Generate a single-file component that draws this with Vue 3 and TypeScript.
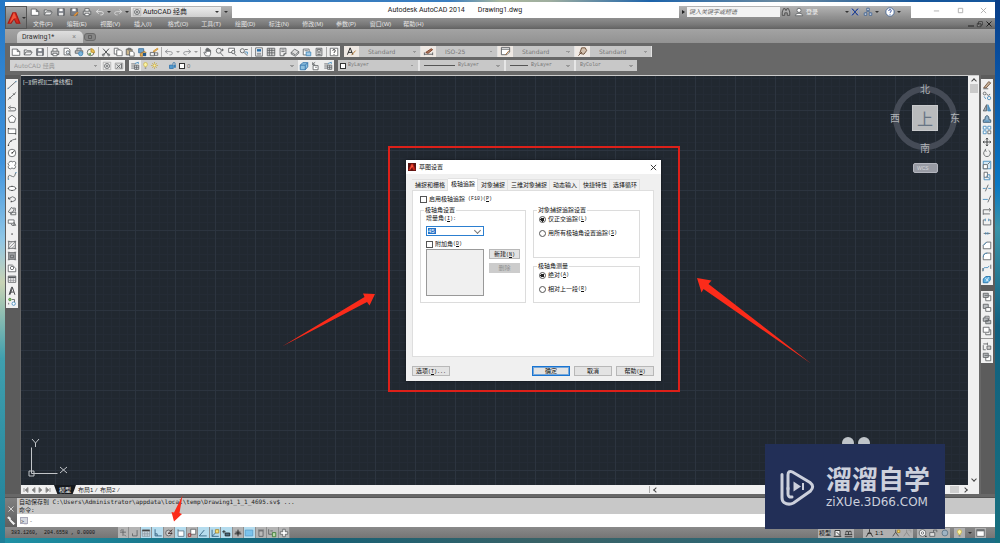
<script setup lang="ts">
import { h, ref } from 'vue'

type Shape = [d: string, stroke: string, fill?: string]

const K = '#5c5f62'
const B = '#3f88bc'
const N = 'none'

const shapes: Record<string, Shape[]> = {
  new: [['M1.5 2.5h6l3 3v4.500h-9z M7.500 2.500v3h3', K, '#fff']],
  open: [['M1.500 9.500v-6h3l1 1h4v1.500', K, '#e8e8e8'], ['M1.500 9.500l2-3.500h7.500l-2 3.500z', K, '#f4f4f4']],
  save: [['M2 2h8v8h-8z', K, '#7b7f88'], ['M4 2h4v3h-4z', N, '#fff'], ['M3.500 7h5v3h-5z', N, '#e6e6e6']],
  saveas: [['M2 2h8v8h-8z', K, '#7b7f88'], ['M4 2h4v3h-4z', N, '#fff'], ['M6 10l4-4 1 1-4 4z', '#c77b2b', '#e8a24a']],
  print: [['M3.500 5v-3h5v3', K, '#fff'], ['M1.500 5h9v4h-9z', K, '#d5d5d5'], ['M3.500 7.500h5v3h-5z', K, '#fff']],
  preview: [['M2.500 1.500h5l2 2v6h-7z', K, '#fff'], ['M5 6.500a2 2 0 1 0 4 0a2 2 0 1 0-4 0 M8.500 8l2.500 3', K, '#e3edf6']],
  plot: [['M3.500 4v-2.500h5v2.500 M1.500 4.500h9v3h-9z', K, '#c5c5c5'], ['M5.500 8a2.500 2.500 0 1 0 5 0a2.500 2.500 0 1 0-5 0', B, '#7db5da']],
  publish: [['M1.500 6.500a4 4 0 1 0 8 0a4 4 0 1 0-8 0', K, '#f1f1e6'], ['M6 2a4.500 4.500 0 0 1 4 5l-4-1z', '#b58a2b', '#edc352'], ['M2 8.500l4-2v4z', N, '#6fa35b']],
  cut: [['M2.500 2l6.500 7.500 M9.500 2l-6.500 7.500', '#2d3033'], ['M1.500 9.500a1.200 1.200 0 1 0 2.400 0a1.200 1.200 0 1 0-2.400 0 M8.100 9.500a1.200 1.200 0 1 0 2.400 0a1.200 1.200 0 1 0-2.400 0', K]],
  copy: [['M1.500 1.500h4.500l1 1v6h-5.500z', K, '#fff'], ['M4.500 3.500h4.500l2 2v5h-6.500z', K, '#fff']],
  paste: [['M1.500 2.500h7v7h-7z', K, '#c9b48a'], ['M3.500 1.500h3v2h-3z', K, '#999'], ['M5.500 5h3.500l2 2v4h-5.500z', K, '#fff']],
  match: [['M2 2h6v5h-6z', '#3a6f99', '#6ea0c9'], ['M4 8l5-3 2 2-4 4h-3z', '#a8742c', '#e5b055'], ['M7 7h4v4h-4z', N, '#26598b']],
  block: [['M1.500 6.500h5v4h-5z M6.500 7h4v3h-4z', K, '#eee'], ['M5 5l5-3.500 1 1-5 3.500z', '#c98c2f', '#efc15f']],
  undo: [['M4.500 3l-3 2.500 3 2.500 M1.500 5.500h6q2.500 0 2.500 2t-2.500 2h-1', '#8b8e91']],
  redo: [['M7.500 3l3 2.500-3 2.500 M10.500 5.500h-6q-2.500 0-2.500 2t2.500 2h1', '#8b8e91']],
  qundo: [['M4.500 3l-3 2.500 3 2.500 M1.500 5.500h6q2.500 0 2.500 2t-2.500 2h-1', '#e6e6e6']],
  qredo: [['M7.500 3l3 2.500-3 2.500 M10.500 5.500h-6q-2.500 0-2.500 2t2.500 2h1', '#d9d9d9']],
  pan: [['M3 10.500l-2-4 1-.500 1.500 1.500v-5h1v3-4h1.200v4-3.500h1.200v3.500-2.500h1.200v2.500-1.500h1v4l-1.100 3z', K, '#fff']],
  zoomrt: [['M1.500 4.500a3 3 0 1 0 6 0a3 3 0 1 0-6 0 M6.500 7l3.500 4 M9 2v3 M7.500 3.500h3', K]],
  zoomwin: [['M2 1.500h7v5h-7z', K, '#fff'], ['M5.500 6a2 2 0 1 0 4 0a2 2 0 1 0-4 0 M8.500 7.500l2.500 3', K, '#eee']],
  zoomprev: [['M1.500 4.500a2.500 2.500 0 1 0 5 0a2.500 2.500 0 1 0-5 0 M6 6.500l4 4 M7 3h3.500', K, '#eee'], ['M7 6h3v3', B]],
  props: [['M2 1h8v10h-8z', K, '#fff'], ['M3.500 2.500h5v3h-5z', N, '#2c6fa8'], ['M3.500 7.500h5 M3.500 9.500h5', K]],
  center: [['M1.500 1.500h9v9h-9z', K, '#d6d6d6'], ['M1.500 4h9 M4 1.500v9 M7 1.500v9 M1.500 7h9', K]],
  palette: [['M2.500 1.500h7v6l-3 3h-4z', K, '#efefef'], ['M4 3.500h4 M4 5.500h4 M7 11v-3h3', K]],
  sheet: [['M1.500 6.500l4-4 5 3-4 4z', K, '#ddd'], ['M1.500 6.500v2l5 2.500 4-3.500v-2', K]],
  markup: [['M1.500 2.500h7v7h-7z', K, '#fff'], ['M5 6h5.500v4.500h-5.500z', B, '#a7cce6'], ['M3 4.500h4', K]],
  calc: [['M2.500 1.500h7v9h-7z', K, '#e3e3e3'], ['M4 3h4v2h-4z', K, '#fff'], ['M4 7h4 M4 9h4', K]],
  help: [['M1.500 1.500h9v9h-9z', K, '#fff'], ['M4.500 4.500q0-1.500 1.500-1.500t1.500 1.500-1.500 2v.800 M6 8.500v1', '#222']],
  txtstyle: [['M1.500 9.500l3-7.500 3 7.500 M2.500 7h4', '#222'], ['M6 10l4.500-5', '#b5782e']],
  dimstyle: [['M1.500 9h9 M1.500 7v3 M10.500 7v3', K], ['M3 7l6-4 1.500 1-5 4z', '#7a3b25', '#b07b5d']],
  tblstyle: [['M1.500 1.500h9v5l-3 3h-6z M1.500 3.500h9', K, '#fff'], ['M6 9.500l4-4.500', '#a5672f']],
  mlstyle: [['M3 8l2-6 4 0 1.500 3-3 4z', '#6a4b35', '#d4c2b0'], ['M1.500 10.500l4-4', '#6a4b35']],
  gear: [['M1.500 1.500h9v9h-9z', '#b0b0b0'], ['M3 6a3 3 0 1 0 6 0a3 3 0 1 0-6 0', K], ['M5 6a1 1 0 1 0 2 0a1 1 0 1 0-2 0', K]],
  wsp: [['M1.500 2.500h9v7h-9z', '#999', '#ddd'], ['M3 4l5 5 M8 4l-5 5 M9 3v6', K]],
  layers: [['M1.500 3.500h5 M1.500 6h4 M1.500 8.500h4', K], ['M5.500 5h5v5h-5z M5.500 7.500h5 M8 5v5', K, '#dfe6ec'], ['M6 3l4-1.500v2', B]],
  bulb: [['M3.500 4.500a2.500 2.500 0 1 1 5 0q0 1.500-1.500 2.500v1h-2v-1q-1.500-1-1.500-2.500z', '#c9b34b', '#fbf3a3'], ['M5 9.500h2', K]],
  sun: [['M4 6a2 2 0 1 0 4 0a2 2 0 1 0-4 0', '#c2a331', '#fdf0a0'], ['M6 1.500v1.500 M6 9v1.500 M1.500 6h1.500 M9 6h1.500 M3 3l1 1 M8 8l1 1 M9 3l-1 1 M4 8l-1 1', '#c2a331']],
  lock: [['M2 5.500h5v4.500h-5z', '#2c6fa8', '#4f9bd0'], ['M6.500 5v-1.500q0-1.500 1.500-1.500t1.500 1.500v1.500', '#2c6fa8'], ['M8 5h2.500v4h-2.500z', N, '#3b80b5']],
  cube: [['M1.500 5l3-3h6v5l-3 3.500h-6z', '#2c6fa8', '#8fc0de'], ['M1.500 5h6v5.500 M7.500 5l3-3', '#2c6fa8']],
  layprev: [['M2.500 5.500h6v5h-6z', K, '#fff'], ['M2 1.500v3h3 M2 4l3-2.500 M5 7.500h2', K]],
  line: [['M1 10.500l10-9', K], ['M.500 10h1.500 M10 2h1.500', B]],
  xline: [['M1 10.500l10-9', K], ['M3 7.500l1.500 1.500 M7.500 3l1.500 1.500', '#222']],
  pline: [['M1.500 9.500h7q2 0 2-2t-2-2h-5', K], ['M4.500 3.500l-3 2 3 2', K]],
  polygon: [['M6 1.500l4.500 3.500-1.700 5h-5.600l-1.700-5z', K, '#fff']],
  rect: [['M1.500 3.500h9v5.500h-9z', K, '#fff'], ['M1 3h1.500 M9.500 9.500h1.500', '#111']],
  arc: [['M1.500 10.500q1-7 9-8', K], ['M1 10h1.500 M4 5h1.500 M10 2.500h1', '#111']],
  circle: [['M1.500 6a4.500 4.500 0 1 0 9 0a4.500 4.500 0 1 0-9 0', K, '#fff'], ['M5 6h2 M6 6l3-2.500', '#222']],
  cloud: [['M3 2q3-1.500 3 .500 4-2 4.500 1 .500 2-1.500 2.500 2.500 2 .500 4-2 1-3.500-.500-1.500 2-4 .500-1.500-2 .500-3.500-3-2 .500-4z', K, '#fff']],
  spline: [['M1.500 10q-.500-6 2.500-4.500t4 1.500 2.500-5', K], ['M1 10h1.500 M10 2h1.500', B]],
  ellipse: [['M1.500 6.500a4.500 2.500 0 1 0 9 0a4.500 2.500 0 1 0-9 0', K, '#fff'], ['M5.500 4h1 M1 6.500h1 M10 6.500h1 M5.500 9h1', '#111']],
  earc: [['M3 5q4-3.500 7 0 1.500 3-3 4h-2', K], ['M2 4v2h2 M5 8v2', '#222']],
  insert: [['M1.500 7l4-5.500 3 3-3 4.500z M4.500 7.500h6v3h-6z', K, '#eee'], ['M7 2.500h3v4', K]],
  mkblock: [['M1.500 3.500h7v4h-7z', K, '#fff'], ['M5 8a2 2 0 1 0 4 0 M8 6l2.500 4h-4', K]],
  point: [['M5.500 6h1.300 M6 5.500v1.300', '#333']],
  hatch: [['M2 2h8v8h-8z', K, '#eee'], ['M2 6l4-4 M2 10l8-8 M6 10l4-4', '#8a8d90'], ['M1 1.500h2 M9 1.500h2 M1 10.500h2 M9 10.500h2', K]],
  gradient: [['M2 2h8v8h-8z', K, '#a2a5a8'], ['M4 5h4v3h-4z M1 1.500h2 M9 1.500h2 M1 10.500h2 M9 10.500h2', K]],
  region: [['M1.500 2.500h5l4 4v4h-9z', K, '#fff'], ['M4 6a2 2 0 1 0 4 0a2 2 0 1 0-4 0', K]],
  table: [['M1.500 2.500h9v7.500h-9z', K, '#fff'], ['M1.500 3h9v2h-9z', N, '#55585b'], ['M4.500 5v5 M7.500 5v5 M1.500 7.500h9', '#8b8e91']],
  mtext: [['M2.500 10.500l3-9h1l3 9 M3.800 7.300h4.400 M3.500 10.500l3-8.500', '#2b2e31']],
  addsel: [['M2 3a1.500 1.500 0 1 0 3 0a1.500 1.500 0 1 0-3 0', '#4f8b3b', '#8cc074'], ['M6 8a2 2 0 1 0 4 0a2 2 0 1 0-4 0', B, '#fff'], ['M6 3h3v3 M2 7v2', K]],
  erase: [['M2 9.500l6-7.500 2.500 1.500-5.500 6z', '#6a4b35', '#c9b39a'], ['M1.500 10.500h6', K]],
  copyobj: [['M1.500 3a1.700 1.700 0 1 0 3.400 0a1.700 1.700 0 1 0-3.400 0 M6 3.500a1.700 1.700 0 1 0 3.400 0', K], ['M6.500 8.500a2 2 0 1 0 4 0a2 2 0 1 0-4 0 M2.500 6.500l2 3', B]],
  mirror: [['M5.500 2v7.500h-4z', K, '#9cabb7'], ['M7 2v7.500h3.500z', B, '#5f9cc6']],
  offset: [['M1.500 10h9v-3h-2q0-5-2.500-5t-2.500 5h-2z', '#33526b', '#8fb2cc'], ['M3.500 8.500h5', B]],
  array: [['M1.500 1.500h3.500v3.500h-3.500z M7 1.500h3.500v3.500h-3.500z M1.500 7h3.500v3.500h-3.500z', B, '#fff'], ['M7 7h3.500v3.500h-3.500z', K, '#fff']],
  move: [['M6 1.500v9 M1.500 6h9 M4.800 2.800l1.200-1.500 1.200 1.500 M4.800 9.200l1.200 1.500 1.200-1.500 M2.800 4.800l-1.500 1.200 1.500 1.200 M9.200 4.800l1.500 1.200-1.500 1.200', '#2b2e31']],
  rotate: [['M4 2.800a4 4 0 1 0 4 0 M4.500 1l-1 2 2 1', K]],
  scale: [['M1.500 1.500h9v9h-9z', B, '#d4e8f5'], ['M1.500 5.500h5v5h-5z', K, '#fff'], ['M7 5l2.500-2.500', K]],
  stretch: [['M2.500 1.500h4v6h-4z', K, '#fff'], ['M2.500 7.500v3h7v-6h-3 M5 6l4 3', B]],
  trim: [['M1 6.500h3.500 M7.500 6.500h3.500', B], ['M4 10l3.500-8', K]],
  extend: [['M1 6.500h6', B], ['M7 10l3.500-8', K]],
  breakpt: [['M1.500 10.500v-6h9 M8.500 2.500l2 2-2 2 M1.500 9.500h8', K]],
  breakob: [['M3.500 3.500h-2v6h9v-6h-2', K], ['M4 2v3 M8 2v3', B]],
  join: [['M2 6.500h8', K], ['M4.500 5v3 M7 5v3', B]],
  chamfer: [['M1.500 10.500v-4l4-4h5v8z', K, '#fff'], ['M1.500 6.500l4-4', B]],
  fillet: [['M1.500 10.500v-3q0-5 5-5h4v8z', K, '#fff'], ['M1.500 7.500q0-5 5-5', B]],
  blend: [['M1.500 9.500q0-5 3-4t4-2', B], ['M1 6v4 M10.500 2v5', K]],
  explode: [['M1.500 6l3-3h5.500v4l-3 3.500h-5.500z', '#1e6da6', '#5fb0e0'], ['M4 5l4 4 M8 4l-3 5', '#e9f4fb']],
  front: [['M4.500 4.500h6v6h-6z', K, '#fff'], ['M1.500 1.500h6v5h-6z', K, '#b9bcbf'], ['M3 4h4', K]],
  back: [['M1.500 1.500h6v5h-6z', K, '#b9bcbf'], ['M4.500 5.500h6v4.500h-6z', K, '#fff']],
  above: [['M3.500 1.500h5v4h-5z', K, '#fff'], ['M1.500 3.500h6v4h-6z M4.500 6.500h6v4h-6z', K, '#b9bcbf']],
  under: [['M1.500 1.500h7v6h-7z', K, '#fff'], ['M4.500 8.500v2h6v-6h-2', K]],
  annfront: [['M1.500 3.500h5 M6.500 2v3 M1.500 5v5.500h3', K], ['M6 6h4.500v4h-4.500z', K, '#ccc']],
  binoc: [['M1.500 10v-4l1.500-4h2l.500 2h1l.500-2h2l1.500 4v4h-3v-3h-3v3z', '#444', '#aaa']],
  user: [['M3.500 4a2.500 2.500 0 1 0 5 0a2.500 2.500 0 1 0-5 0', K, '#fff'], ['M1.500 10.500q0-3 4.500-3t4.500 3z', K, '#fff']],
  exch: [['M2 2l8 8 M10 2l-8 8 M3 2l6 8 M9 2l-6 8', '#1e3f94'], ['M1.500 2v8 M10.500 2v8', '#8fa5da']],
  tri: [['M4.500 1.500h3v3h-3z M1.500 7h3v3h-3z M7.500 7h3v3h-3z', '#42638f', '#cfdced'], ['M6 4.500l-3 2.500 M6 4.500l3 2.500', '#42638f']],
  qmark: [['M1 6a5 5 0 1 0 10 0a5 5 0 1 0-10 0', '#3c5f92', '#fff'], ['M4.500 4.800q0-1.800 1.500-1.800t1.500 1.500-1.500 2v.500 M6 8.300v1', '#1e3f94']],
  infer: [['M6 1.500v8 M2.500 5h7 M3 3l2-1 M7.500 8l2 2', K]],
  snap: [['M8.500 2.500v7h-5.500 M3 6.500v3', K]],
  grid: [['M1.500 2.500h9v7.500h-9z', '#8f9ba3', '#c8d6df'], ['M1.500 2h9v2h-9z', N, '#454545'], ['M4.500 4v6 M7.500 4v6 M1.500 7h9', '#8f9ba3']],
  ortho: [['M2.500 1.500v8h8 M2.500 7h2.500v2.500', '#2b5a78']],
  polar: [['M2 6a3.500 3.500 0 1 0 7 0a3.500 3.500 0 1 0-7 0', K, '#ccc'], ['M5 6.500l5-4.500 M5 6.500h5', '#3a2020']],
  osnap: [['M2.500 3.500h7v6.500h-7z', '#5a7385', '#fff'], ['M1.500 2.500h2', K]],
  osnap3: [['M4.500 1.500h6v6h-6z', K, '#fff'], ['M1.500 7h3v3h-3z', '#8c2a2a', '#e2b9b9']],
  otrack: [['M1.500 9.500h9 M1.500 9.500l6-7', '#2b5a78']],
  ducs: [['M2.500 2v8h8 M2.500 10l5-5', '#2b5a78'], ['M6.500 2h4v4h-4z', '#a8852b', '#f0df7a']],
  dyn: [['M1.500 4.500h4 M3.500 2.500v4', '#222'], ['M5 6h5.500v3.500h-5.500z', '#222', '#4a6a80']],
  lwt: [['M2 7h8', '#111'], ['M6 2v8 M3 5h6', '#111']],
  tpy: [['M1.500 2.500h9v7h-9z', '#5ba0cc', '#7cc3ec']],
  qp: [['M3.500 3.500h5v6.500h-5z M2.500 2.500h7', K, '#bbb']],
  sc: [['M2 1.500v6h4 M4 3.500h3', K], ['M6.500 5.500h4v5h-4z', '#3f7a35', '#b9dba9']],
  am: [['M4.500 1.500h3v3h3v3h-3v3h-3v-3h-3v-3h3z', K, '#fff']],
  layout: [['M1.500 10h9 M3 9v-6h6v6 M5 5l4 4', '#222', '#eee']],
  qview: [['M1.500 8h9 M3 8v-4h2.500v4 M6.500 8v-4h2.500v4 M1.500 10.500h9', '#222', '#eee']],
  scaleA: [['M6 1.500v3l-4 6 M6 4.500l4 6 M3.500 6.500h5', '#222']],
  annvis: [['M5 2v3l-3.500 5 M5 5l3.500 5', '#444'], ['M7 2.500h3v3h-3z', '#a8852b', '#f6dc6a']],
  annauto: [['M5 2v3l-3.500 5 M5 5l3.500 5', '#888'], ['M7 2.500h3v3', '#999']],
  wsgear: [['M2 6a4 4 0 1 0 8 0a4 4 0 1 0-8 0 M4.500 6a1.500 1.500 0 1 0 3 0a1.500 1.500 0 1 0-3 0', K, '#fff'], ['M9 10h2', '#111']],
  tlock: [['M1.500 5.500h6v4.500h-6z', K, '#ddd'], ['M6 5v-2.500h4v2.500', K]],
  hw: [['M3 6a3.500 3.500 0 1 0 7 0a3.500 3.500 0 1 0-7 0', '#5c7284', '#9fb4c4']],
  clean: [['M1.500 2h9v8h-9z', K, '#fff'], ['M1.500 2h9v2h-9z', N, '#6f7274']],
  wrench: [['M2 2.500l2 1 .500 2 4.500 5 1.500-1.500-5-4.500-.500-2.500-2-1z', '#f0f0f0', '#f0f0f0']],
  cross: [['M3 3l6 6 M9 3l-6 6', '#e4e4e4']],
  logo: [['M1 10.500l4-9h2.500l3.500 9h-3l-2-4-2.500 4z', '#a81a14', '#d42a1f'], ['M6 1l2 5-2 .500-4 4.500z', N, '#f0583c']],
  restore: [['M4 2.500h5.500v5h-5.500z M2 5h5.500v5h-5.500z', '#222', '#999']],
}

function Glyph(props: { n: string }) {
  return h(
    'svg',
    { class: 'glyph', viewBox: '0 0 12 12', 'aria-hidden': 'true' },
    (shapes[props.n] ?? []).map(([d, stroke, fill]) => h('path', { d, stroke, fill: fill ?? 'none' })),
  )
}
Glyph.props = ['n']

const menus = [
  ['文件', 'F'], ['编辑', 'E'], ['视图', 'V'], ['插入', 'I'], ['格式', 'O'], ['工具', 'T'],
  ['绘图', 'D'], ['标注', 'N'], ['修改', 'M'], ['参数', 'P'], ['窗口', 'W'], ['帮助', 'H'],
]
const quick = ['new', 'open', 'save', 'saveas', 'print']
const standard = [
  ['new', 'open', 'save'],
  ['print', 'preview', 'plot', 'publish'],
  ['cut', 'copy', 'paste', 'match', 'block'],
  ['undo', '', 'redo', ''],
  ['pan', 'zoomrt', 'zoomwin', 'zoomprev'],
  ['props', 'center', 'palette', 'sheet', 'markup', 'calc'],
  ['help'],
]
const styleBoxes = [
  { icon: 'txtstyle', label: '文字样式', value: 'Standard' },
  { icon: 'dimstyle', label: '标注样式', value: 'ISO-25' },
  { icon: 'tblstyle', label: '表格样式', value: 'Standard' },
  { icon: 'mlstyle', label: '多重引线样式', value: 'Standard' },
]
const drawTools = [
  'line', 'xline', 'pline', 'polygon', 'rect', 'arc', 'circle', 'cloud', 'spline', 'ellipse',
  'earc', 'insert', 'mkblock', 'point', 'hatch', 'gradient', 'region', 'table', 'mtext', 'addsel',
]
const modifyTools = [
  'erase', 'copyobj', 'mirror', 'offset', 'array', 'move', 'rotate', 'scale', 'stretch',
  'trim', 'extend', 'breakpt', 'breakob', 'join', 'chamfer', 'fillet', 'blend', 'explode',
]
const orderTools = ['front', 'back', 'above', 'under', '', 'annfront', 'front']
const modes: [string, boolean][] = [
  ['infer', false], ['snap', false], ['grid', true], ['ortho', true], ['polar', false],
  ['osnap', true], ['osnap3', false], ['otrack', true], ['ducs', true], ['dyn', true],
  ['lwt', false], ['tpy', true], ['qp', false], ['sc', false], ['am', false],
]
const tabs = ['捕捉和栅格', '极轴追踪', '对象捕捉', '三维对象捕捉', '动态输入', '快捷特性', '选择循环']
const activeTab = ref('极轴追踪')
const trackOn = ref(false)
const extraOn = ref(false)
const trackMode = ref('ortho')
const measure = ref('abs')
</script>

<template>
  <div class="desktop">
    <div class="window">
      <header class="head">
        <button class="appbtn" aria-label="应用程序菜单"><Glyph n="logo" /><i class="caret"></i></button>
        <div class="headrows">
          <div class="titlebar">
            <div class="qat">
              <button v-for="q in quick" :key="q" :aria-label="q"><Glyph :n="q" /></button>
              <button aria-label="undo"><Glyph n="qundo" /></button><i class="caret"></i>
              <button aria-label="redo"><Glyph n="qredo" /></button><i class="caret"></i>
              <div class="wsbox">
                <Glyph n="gear" />
                <select aria-label="工作空间"><option>AutoCAD 经典</option></select>
                <i class="caret"></i>
              </div>
              <i class="caret more"></i>
            </div>
            <h1><span>Autodesk AutoCAD 2014</span><span>Drawing1.dwg</span></h1>
            <div class="info">
              <i class="play"></i>
              <input type="text" placeholder="键入关键字或短语" aria-label="搜索" />
              <Glyph n="binoc" /><Glyph n="user" />
              <button class="login">登录</button>
              <i class="caret"></i><Glyph n="exch" /><Glyph n="tri" /><i class="caret"></i>
              <Glyph class="ask" n="qmark" /><i class="caret"></i>
            </div>
            <div class="winbtns">
              <button aria-label="最小化"><svg viewBox="0 0 8 8"><path d="M1 4.500h6" /></svg></button>
              <button aria-label="最大化"><svg viewBox="0 0 8 8"><path d="M1.500 1.500h5v5h-5z" /></svg></button>
              <button aria-label="关闭"><svg viewBox="0 0 8 8"><path d="M1 1l6 6M7 1l-6 6" /></svg></button>
            </div>
          </div>
          <nav class="menubar">
            <div class="menus"><button v-for="[t, k] in menus" :key="t">{{ t }}({{ k }})</button></div>
            <div class="mdi">
              <svg viewBox="0 0 8 8"><path d="M1 6h6" /></svg>
              <Glyph n="restore" />
              <svg viewBox="0 0 8 8"><path d="M1.500 1.500l5 5M6.500 1.500l-5 5" /></svg>
            </div>
          </nav>
        </div>
      </header>

      <div class="doctabs">
        <button class="doctab">Drawing1*<i>×</i></button>
        <button class="addtab" aria-label="新建"><svg viewBox="0 0 8 8"><path d="M2 2h4v4h-4z" /></svg></button>
      </div>

      <div class="toolrows">
        <div class="toolrow">
          <div class="bar">
            <div v-for="(g, gi) in standard" :key="gi" class="group">
              <template v-for="(n, i) in g" :key="i">
                <button v-if="n" :aria-label="n"><Glyph :n="n" /></button>
                <i v-else class="caret pale"></i>
              </template>
            </div>
          </div>
          <div class="bar styles">
            <div v-for="(s, i) in styleBoxes" :key="i" class="stylebox">
              <Glyph :n="s.icon" />
              <select :aria-label="s.label"><option>{{ s.value }}</option></select>
            </div>
          </div>
        </div>
        <div class="toolrow">
          <div class="bar wsbar">
            <select aria-label="工作空间"><option>AutoCAD 经典</option></select>
            <button aria-label="设置"><Glyph n="gear" /></button>
            <button aria-label="工作空间保存"><Glyph n="wsp" /></button>
          </div>
          <div class="bar">
            <button aria-label="图层"><Glyph n="layers" /></button>
            <div class="layerbox">
              <Glyph n="bulb" /><Glyph n="sun" /><i class="blank"></i><Glyph n="lock" /><i class="swatch"></i>
              <select aria-label="当前图层"><option>0</option></select>
            </div>
            <button aria-label="置为当前"><Glyph n="cube" /></button>
            <button aria-label="上一个图层"><Glyph n="layprev" /></button>
            <button aria-label="图层状态"><Glyph n="layers" /></button>
          </div>
          <div class="bar objprops">
            <div class="prop p1"><i class="swatch"></i><select aria-label="颜色"><option>ByLayer</option></select></div>
            <div class="prop p2"><i class="rule"></i><select aria-label="线型"><option>ByLayer</option></select></div>
            <div class="prop p3"><i class="rule"></i><select aria-label="线宽"><option>ByLayer</option></select></div>
            <div class="prop p4"><select aria-label="打印样式"><option>ByColor</option></select></div>
          </div>
        </div>
      </div>

      <main class="work">
        <aside class="side">
          <div class="vbar v20"><button v-for="t in drawTools" :key="t" :aria-label="t"><Glyph :n="t" /></button></div>
        </aside>
        <section class="view">
          <div class="canvas">
            <p class="vplabel">[−][俯视][二维线框]</p>
            <svg class="ucs" viewBox="0 0 44 44">
              <path d="M5.500 38.500v-26 M5.500 38.500h26 M3 36h5v5h-5z M6 4l3.500 4 3.500-4 M9.500 8v4 M34 32l7 6 M41 32l-7 6" />
            </svg>
            <div class="compass">
              <b class="n">北</b><b class="w">西</b>
              <div class="face">上</div>
              <b class="e">东</b><b class="s">南</b>
            </div>
            <button class="wcs">WCS</button>
          </div>
          <div class="vscroll"><i class="chev up"></i><i class="thumb"></i><i class="chev down"></i></div>
          <div class="layouts">
            <svg class="navs" viewBox="0 0 30 8">
              <path d="M2 2v4 M6 1.500l-3 2.500 3 2.500z M13 1.500l-3 2.500 3 2.500z M17 1.500l3 2.500-3 2.500z M24 1.500l3 2.500-3 2.500z M28 2v4" />
            </svg>
            <button class="model">模型</button><button>布局1</button><em>/</em><button>布局2</button><em>/</em>
            <div class="hscroll"><i class="chev left"></i><i class="thumb"></i><i class="chev right"></i></div>
          </div>
        </section>
        <aside class="side right">
          <div class="vbar v18"><button v-for="t in modifyTools" :key="t" :aria-label="t"><Glyph :n="t" /></button></div>
          <div class="vbar order">
            <template v-for="(t, i) in orderTools" :key="i">
              <button v-if="t" :aria-label="t"><Glyph :n="t" /></button><hr v-else />
            </template>
          </div>
        </aside>
      </main>

      <section class="command">
        <div class="grip"><Glyph n="cross" /><Glyph n="wrench" /></div>
        <div class="cmdbody">
          <div class="log">自动保存到 C:\Users\Administrator\appdata\local\temp\Drawing1_1_1_4695.sv$ ...<br />命令:</div>
          <label class="cmdline"><span>&gt;_</span>-<input type="text" aria-label="命令" /></label>
        </div>
      </section>

      <footer class="status">
        <span class="coords">383.1260,&nbsp; 204.6558 , 0.0000</span>
        <div class="modes">
          <button v-for="[n, on] in modes" :key="n" :class="{ on }" :aria-label="n" :aria-pressed="on"><Glyph :n="n" /></button>
        </div>
        <div class="tray">
          <button class="txt">模型</button><Glyph n="layout" /><Glyph n="qview" />
          <button class="txt scale"><Glyph n="scaleA" />1:1</button>
          <Glyph n="annvis" /><Glyph n="annauto" />
          <i class="space"></i><Glyph n="wsgear" /><Glyph n="tlock" /><Glyph n="hw" />
          <i class="space"></i><Glyph n="bulb" /><i class="caret"></i><Glyph n="clean" />
        </div>
      </footer>
    </div>

    <section class="dialog" role="dialog" aria-labelledby="dlg-title">
      <header class="dlghead">
        <span class="dlgicon"><Glyph n="logo" /></span>
        <h2 id="dlg-title">草图设置</h2>
        <button aria-label="关闭"><svg viewBox="0 0 8 8"><path d="M1 1l6 6M7 1l-6 6" /></svg></button>
      </header>
      <div class="dlgtabs" role="tablist">
        <button v-for="t in tabs" :key="t" role="tab" :aria-selected="t === activeTab" :class="{ sel: t === activeTab }" @click="activeTab = t">{{ t }}</button>
      </div>
      <div class="panel">
        <label class="check"><input v-model="trackOn" type="checkbox" />启用极轴追踪<span class="key">&nbsp;(F10)(<u>P</u>)</span></label>
        <div class="cols">
          <fieldset class="angles">
            <legend>极轴角设置</legend>
            <label for="inc">增量角<span class="key">(<u>I</u>):</span></label>
            <div class="inc"><select id="inc"><option>45</option><option>90</option></select></div>
            <label class="check extra"><input v-model="extraOn" type="checkbox" />附加角<span class="key">(<u>D</u>)</span></label>
            <div class="listrow">
              <div class="list"></div>
              <div class="listbtns">
                <button class="btn">新建<span class="key">(<u>N</u>)</span></button>
                <button class="btn off" disabled>删除</button>
              </div>
            </div>
          </fieldset>
          <div class="rightcol">
            <fieldset class="g1">
              <legend>对象捕捉追踪设置</legend>
              <label class="check"><input v-model="trackMode" type="radio" name="track" value="ortho" />仅正交追踪<span class="key">(<u>L</u>)</span></label>
              <label class="check"><input v-model="trackMode" type="radio" name="track" value="all" />用所有极轴角设置追踪<span class="key">(<u>S</u>)</span></label>
            </fieldset>
            <fieldset class="g2">
              <legend>极轴角测量</legend>
              <label class="check"><input v-model="measure" type="radio" name="measure" value="abs" />绝对<span class="key">(<u>A</u>)</span></label>
              <label class="check"><input v-model="measure" type="radio" name="measure" value="rel" />相对上一段<span class="key">(<u>R</u>)</span></label>
            </fieldset>
          </div>
        </div>
      </div>
      <footer class="dlgfoot">
        <button class="btn">选项<span class="key">(<u>T</u>)...</span></button>
        <i></i>
        <button class="btn primary">确定</button>
        <button class="btn">取消</button>
        <button class="btn">帮助<span class="key">(<u>H</u>)</span></button>
      </footer>
    </section>

    <div class="frame"></div>
    <svg class="marks" viewBox="0 0 1000 543">
      <path d="M282 346.500L367 302l2.500 3.500L375 294l-12-.500 1.500 3.500z" />
      <path d="M811 363.500L703.500 289l-2 3.500L697 278l14.500 2.500-3 3.500z" />
      <path d="M182.500 495.500l-3 17.500 2.500 1-8 7.500-2.500-9.500 2.500.500z" />
    </svg>

    <div class="bumps"><i></i><i></i></div>
    <div class="brand">
      <svg viewBox="0 0 36 38">
        <path class="outline" d="M9 21v-14q0-5 4.500-3l17.500 10.500q5 4 .500 8.500l-17 12q-5 2.500-9.500-.500-2-1.500-2-5v-23" />
        <path class="outline" d="M9 20v6q0 3.500 4 3" />
        <path d="M14.500 13.500l7.500 5-7.500 5z" />
        <path class="stem" d="M24 15v7" />
      </svg>
      <div class="brandtext"><strong>溜溜自学</strong><span>ziXUe.3D66.COM</span></div>
    </div>
  </div>
</template>

<style>
html, body { margin: 0; overflow: hidden; }
</style>

<style scoped>
* { box-sizing: border-box; }
.desktop {
  position: relative; height: 100vh; padding: 2px 5px 5px;
  display: flex; flex-direction: column;
  font: 6px/8px "Liberation Sans", "Noto Sans CJK SC", sans-serif; color: #222;
  background:
    linear-gradient(#2477c5 0, #3f93de 30%, #8fc6e6 44%, #c8d3b4 52%, #3f9fae 66%, #1f7f98 100%) left / 5px 100% no-repeat,
    linear-gradient(#083c86 0, #0a56a8 15%, #0a78c4 34%, #3b94a8 42%, #12607f 60%, #17707f 100%) right / 5px 100% no-repeat,
    linear-gradient(90deg, #2a76bc, #3b7ec0 45%, #a9b79d 50%, #9fae9f 55%, #1c63ab 65%, #6c8ba0 78%, #15569c 92%) top / 100% 2px no-repeat,
    linear-gradient(90deg, #1f91a5, #146177 30%, #3a6266 55%, #1d6c86);
}
button { appearance: none; border: 0; padding: 0; margin: 0; background: none; font: inherit; color: inherit; }
select, input { font: inherit; color: inherit; }
select { appearance: none; border: 0; border-radius: 0; padding: 0; margin: 0; background: none; min-width: 0; }
.glyph { width: 12px; height: 10px; flex: none; display: block; stroke-width: 1; }
.caret { flex: none; width: 0; height: 0; border: 2px solid transparent; border-top-color: #333; border-bottom: 0; }
.caret.pale { border-top-color: #999; }

.window { flex: 1; min-height: 0; display: flex; flex-direction: column; background: #686868; }
.head { display: flex; height: 27px; background: linear-gradient(#fff 16px, #686868 16px); flex: none; }
.appbtn {
  width: 22px; height: 23px; margin-top: 4px; display: flex; align-items: center; justify-content: center; gap: 1px;
  background: linear-gradient(#a5a5a5, #6c6c6c); border: 1px solid #555;
}
.appbtn .glyph { width: 14px; height: 16px; }
.headrows { flex: 1; min-width: 0; display: flex; flex-direction: column; }
.titlebar { height: 16px; display: flex; align-items: flex-end; background: #fff; }
.qat { height: 12px; width: 205px; display: flex; align-items: center; padding-left: 2px; background: linear-gradient(#b4b4b4, #8e8e8e); }
.qat button { width: 12px; margin-right: 1px; }
.qat > .caret { margin-right: 1px; }
.wsbox { flex: 1; height: 10px; margin-left: 1px; display: flex; align-items: center; background: linear-gradient(#ededed, #cfcfcf); padding-right: 2px; }
.wsbox select { flex: 1; font: 7px/10px Roboto, "Noto Sans CJK SC", sans-serif; height: 10px; }
.qat > .more { margin: 0 4px 0 3px; }
h1 { flex: 1; margin: 0; height: 14px; display: flex; justify-content: center; gap: 13px; padding-right: 1px; font: 7px/12px Roboto, sans-serif; color: #222; white-space: nowrap; }
.info { height: 12px; width: 232px; display: flex; align-items: center; background: linear-gradient(#b4b4b4, #8e8e8e); padding-right: 2px; }
.play { border: 2px solid transparent; border-left: 3px solid #222; border-right: 0; margin: 0 2px 0 3px; }
.info input { width: 93px; height: 10px; border: 0; padding: 0 2px; background: #f3f3f3; font-style: italic; }
.info input::placeholder { color: #666; opacity: 1; }
.info .glyph { margin-right: 1px; }
.info .ask { margin-left: 5px; }
.login { color: #f2f2f2; margin-right: 27px; }
.winbtns { display: flex; justify-content: space-between; width: 54px; margin: 0 8px 4px 22px; }
.winbtns svg { width: 7px; height: 7px; display: block; }
.winbtns path { stroke: #aaa; fill: none; }
.menubar { height: 11px; display: flex; align-items: center; padding: 0 2px 0 6px; background: linear-gradient(#8f8f8f, #787878 60%, #626262); color: #e6e6e6; }
.menus { display: grid; grid-template-columns: repeat(12, 1fr); width: 404px; justify-items: start; white-space: nowrap; }
.mdi { margin-left: auto; display: flex; align-items: center; gap: 1px; }
.mdi svg { width: 8px; height: 8px; }
.mdi path { stroke: #222; fill: none; }

.doctabs { flex: none; height: 14px; display: flex; align-items: flex-end; padding-left: 12px; background: linear-gradient(#a3a3a3, #929292); }
.doctab {
  height: 12px; width: 66px; display: flex; justify-content: space-between; align-items: center; padding: 0 7px 0 5px;
  background: linear-gradient(#dedede, #c4c4c4); border-radius: 5px 5px 0 0; font: 7px/10px Roboto, sans-serif; color: #333;
}
.doctab i { color: #888; font-style: normal; }
.addtab { width: 12px; height: 8px; margin: 0 0 2px 1px; background: #858585; border: 1px solid #6a6a6a; border-radius: 3px; }
.addtab svg { width: 6px; height: 6px; display: block; margin: auto; }
.addtab path { fill: none; stroke: #555; }

.toolrows { flex: none; height: 32px; padding: 3px 5px; display: flex; flex-direction: column; gap: 3px; }
.toolrow { display: flex; gap: 4px; height: 11px; }
.bar { display: flex; align-items: center; background: #ededed; height: 11px; }
.bar button { width: 12px; }
.group { display: flex; align-items: center; gap: 0; }
.group + .group { border-left: 1px solid #aaa; margin-left: 1px; padding-left: 1px; }
.group .caret { margin: 0 1px; }
.bar.styles { background: #c6c6c6; width: 308px; }
.stylebox { flex: 1; display: flex; height: 11px; align-items: center; }
.stylebox .glyph { background: #efe9e4; width: 15px; height: 11px; }
.bar select {
  flex: 1; height: 11px; color: #777;
  background: conic-gradient(from 315deg at 50% 100%, #999 90deg, transparent 0) right 4px center / 4px 2px no-repeat;
}
.stylebox select { font: 6px/11px "DejaVu Sans", sans-serif; padding-left: 9px; border-right: 1px solid #e2e2e2; }
.wsbar { width: 115px; }
.wsbar select { padding-left: 4px; font: 6px/11px "DejaVu Sans", "Noto Sans CJK SC", sans-serif; color: #999; background-color: #d3d3d3; }
.layerbox { display: flex; align-items: center; width: 157px; height: 11px; background: #cfcfcf; }
.layerbox .glyph { width: 9px; height: 9px; }
.blank { width: 9px; }
.swatch { width: 6px; height: 6px; border: 1px solid #333; background: #fff; flex: none; margin: 0 2px 0 2px; }
.objprops { background: #c8c8c8; width: 299px; }
.prop { display: flex; align-items: center; height: 11px; border-right: 2px solid #e6e6e6; }
.prop select { font: 5px/11px "Liberation Mono", monospace; }
.p1 { width: 82px; } .p2 { width: 86px; padding-left: 4px; } .p3 { width: 70px; padding-left: 4px; } .p4 { flex: 1; padding-left: 4px; border: 0; }
.rule { height: 1px; background: #555; margin-right: 3px; }
.p2 .rule { width: 31px; } .p3 .rule { width: 18px; }

.work { flex: 1; min-height: 0; display: flex; }
.side { width: 15px; margin-right: 1px; padding: 4px 2px 0 1px; flex: none; background: #5c5c5c; }
.side.right { width: 14px; margin: 0 0 0 2px; padding: 4px 2px 0 0; display: flex; flex-direction: column; gap: 6px; }
.vbar { background: #f0f0f0; display: grid; grid-auto-rows: 1fr; }
.vbar button { display: flex; align-items: center; justify-content: center; }
.v20 { height: 229px; } .v18 { height: 206px; }
.order { height: 72px; grid-template-rows: repeat(4, 1fr) 3px 1fr 1fr; }
.order hr { width: 100%; margin: 1px 0; border: 0; height: 1px; background: #999; }
.view { flex: 1; min-width: 0; display: grid; grid-template: minmax(0, 1fr) 9px / minmax(0, 1fr) 11px; border-top: 1px solid #ccc; }
.canvas {
  position: relative;
  background:
    linear-gradient(90deg, #2c343f 1px, transparent 1px) 34px 0 / 40px 100%,
    linear-gradient(#2c343f 1px, transparent 1px) 0 34px / 100% 40px,
    linear-gradient(90deg, #242b35 1px, transparent 1px) 2px 0 / 8px 100%,
    linear-gradient(#242b35 1px, transparent 1px) 0 2px / 100% 8px, #212830;
}
.vplabel { margin: 2px 0 0 2px; color: #d2d4d6; }
.ucs { position: absolute; left: 5px; bottom: 6px; width: 44px; height: 44px; }
.ucs path { fill: none; stroke: #c2c5c9; }
.compass { position: absolute; right: 11px; top: 10px; width: 64px; height: 64px; }
.compass::before { content: ""; position: absolute; inset: 0; border: 6px solid #454b56; border-radius: 50%; }
.compass b { position: absolute; font: 10px/10px "Noto Sans CJK SC", sans-serif; color: #b0b3b7; }
.n { left: 27px; top: -2px; } .s { left: 27px; bottom: -3px; } .w { left: -3px; top: 27px; } .e { right: -3px; top: 27px; }
.face { position: absolute; left: 19px; top: 19px; width: 26px; height: 26px; background: #b9bbbd; color: #687585; font: 16px/24px "Noto Sans CJK SC", sans-serif; text-align: center; border: 1px solid #c8cacc; }
.wcs { position: absolute; right: 30px; top: 87px; width: 25px; height: 10px; border: 1px solid #b4b6bf; border-radius: 2px; background: #989ba4; color: #d4d6da; text-align: left; padding-left: 3px; font: 5px/7px "Liberation Sans", sans-serif; }
.vscroll { background: #f0f0f0; display: flex; flex-direction: column; align-items: center; padding: 3px 0 2px; }
.vscroll .thumb { width: 8px; height: 9px; background: #c9c9c9; margin-bottom: auto; }
.chev { width: 4px; height: 4px; border: solid #444; border-width: 1px 0 0 1px; flex: none; }
.up { transform: rotate(45deg); margin-bottom: 1px; } .down { transform: rotate(225deg); margin-bottom: 2px; }
.left { transform: rotate(-45deg); } .right.chev { transform: rotate(135deg); }
.layouts { grid-column: 1 / 3; display: flex; align-items: center; background: #f0f0f0; gap: 2px; padding-left: 1px; }
.layouts em { color: #333; margin-right: 1px; }
.navs { width: 30px; height: 8px; }
.navs path { stroke: #999; stroke-width: 1; fill: #777; }
.model { background: #15191e; color: #f5f5f5; padding: 0 5px; height: 9px; clip-path: polygon(0 0, 100% 0, 85% 100%, 15% 100%); }
.hscroll { margin-left: auto; width: 330px; display: flex; align-items: center; border-left: 1px solid #aaa; padding: 0 12px 0 4px; }
.hscroll .thumb { width: 9px; height: 7px; background: #cfcfcf; margin: 0 4px 0 auto; }

.command { flex: none; height: 30px; margin-top: 3px; display: flex; border-top: 1px solid #555; }
.grip { width: 12px; background: linear-gradient(#808080, #5f5f5f); display: flex; flex-direction: column; align-items: center; justify-content: space-around; padding-top: 5px; }
.cmdbody { flex: 1; display: flex; flex-direction: column; }
.log { height: 16px; background: #c8c8c8; padding: 0 2px; color: #222; font: 6px/8px "DejaVu Sans Mono", "Noto Sans CJK SC", monospace; }
.cmdline { flex: 1; display: flex; align-items: center; gap: 2px; background: #fff; padding-left: 3px; color: #555; }
.cmdline span { background: #d6d9e0; border: 1px solid #aab; font: 5px/6px "DejaVu Sans Mono", monospace; height: 7px; }
.cmdline input { flex: 1; border: 0; height: 10px; padding: 0; outline: 0; }

.status { flex: none; height: 11px; display: flex; align-items: center; background: linear-gradient(#8a8a8a, #757575); }
.coords { width: 113px; padding-left: 6px; font: 5px/10px "Liberation Mono", monospace; color: #111; white-space: nowrap; }
.modes { display: grid; grid-template-columns: repeat(15, 1fr); width: 172px; height: 11px; }
.modes button { display: flex; align-items: center; justify-content: center; background: #b4b4b4; border: solid #8f8f8f; border-width: 0 1px 0 0; }
.modes .glyph { width: 10px; }
.modes .on { background: #b5dcee; }
.tray { margin-left: auto; display: flex; align-items: center; padding-right: 9px; color: #111; }
.tray .glyph { width: 11px; background: #b0b0b0; }
.txt { padding: 0 1px; background: #b0b0b0; height: 10px; }
.scale { display: flex; align-items: center; width: 28px; margin: 0 0 0 9px; }
.space { width: 4px; }
.tray > .caret { margin: 0 3px; }

.dialog {
  position: absolute; left: 406px; top: 160px; width: 255px; height: 221px; background: #f0f0f0;
  display: flex; flex-direction: column; color: #111; box-shadow: 0 0 3px #0008;
}
.key { font: 5px/8px "Liberation Mono", monospace; }
.dlghead { height: 14px; background: #fff; display: flex; align-items: center; padding: 0 4px 0 2px; }
.dlgicon { width: 8px; height: 8px; background: #5a1513; display: flex; }
.dlgicon .glyph { width: 8px; height: 8px; }
.dlghead h2 { margin: 0 auto 0 3px; font: 6px/8px "Liberation Sans", "Noto Sans CJK SC", sans-serif; }
.dlghead svg { width: 7px; height: 7px; display: block; }
.dlghead path { stroke: #222; stroke-width: 1; }
.dlgtabs { display: flex; align-items: flex-end; height: 16px; padding-left: 6px; }
.dlgtabs button { height: 11px; padding: 0 2px 0 3px; border: solid #e2e2e2; border-width: 1px 1px 0 0; white-space: nowrap; }
.dlgtabs .sel { height: 13px; background: #fff; padding-bottom: 2px; margin-bottom: -1px; position: relative; }
.panel { margin: 0 7px 0 6px; height: 167px; background: #fff; border: 1px solid #dedede; padding: 4px 7px 0; }
.check { display: flex; align-items: center; height: 8px; white-space: nowrap; }
.check input { appearance: none; width: 7px; height: 7px; margin: 0 2px 0 0; border: 1px solid #555; background: #fff; flex: none; }
.check input[type="radio"] { border-radius: 50%; }
.check input[type="radio"]:checked { background: radial-gradient(#222 0 1px, #222 2px, #fff 2px); }
.check input[type="checkbox"]:checked { background: #333; }
.cols { display: flex; gap: 7px; margin-top: 3px; }
fieldset { min-width: 0; margin: 0; border: 1px solid #dcdcdc; padding: 0 5px; }
legend { padding: 0 1px; margin-left: -2px; height: 8px; }
.angles { width: 106px; height: 97px; }
.angles > label { display: block; }
.inc { margin: 3px 0 4px; width: 58px; height: 10px; border: 1px solid #2c7fd0; position: relative; display: flex; }
.inc select { flex: 1; color: #fff; padding-left: 1px; font: 6px/8px "Liberation Sans", sans-serif; background: linear-gradient(#2472c8, #2472c8) 1px 1px / 8px 6px no-repeat #fff; }
.inc::after { content: ""; position: absolute; right: 3px; top: 1px; width: 4px; height: 4px; border: solid #777; border-width: 0 1px 1px 0; transform: rotate(45deg); }
.angles > .extra { display: flex; }
.listrow { display: flex; gap: 5px; margin-top: 1px; }
.list { width: 58px; height: 47px; background: #f0f0f0; border: 1px solid #999; flex: none; }
.listbtns { display: flex; flex-direction: column; gap: 4px; width: 31px; flex: none; }
.btn { height: 10px; background: #e3e3e3; border: 1px solid #b8b8b8; white-space: nowrap; line-height: 8px; }
.btn.off { background: #ccc; color: #909090; border-color: #ccc; }
.rightcol { width: 107px; display: flex; flex-direction: column; gap: 4px; }
.rightcol .check { margin-top: 1px; }
.rightcol .check + .check { margin-top: 6px; }
.g1 { height: 52px; } .g2 { height: 41px; }
.dlgfoot { display: flex; align-items: center; gap: 4px; padding: 0 7px 0 6px; margin-top: 9px; }
.dlgfoot i { flex: 1; }
.dlgfoot .btn { width: 38px; }
.dlgfoot .primary { border: 1px solid #1874d2; outline: 1px solid #1874d288; outline-offset: -2px; }

.frame { position: absolute; left: 388px; top: 146px; width: 292px; height: 246px; border: 2px solid #dd2019; }
.marks { position: absolute; left: 0; top: 0; width: 1000px; height: 543px; pointer-events: none; }
.marks path { fill: #fb2b1a; }
.bumps { position: absolute; left: 842px; top: 437px; display: flex; gap: 4px; }
.bumps i { width: 12px; height: 12px; border-radius: 50%; background: #bfc4c9; }
.brand { position: absolute; left: 765px; top: 444px; width: 180px; height: 85px; background: #222f57; color: #ccd0dc; display: flex; align-items: center; gap: 11px; padding-left: 14px; }
.brand svg { width: 36px; height: 38px; flex: none; }
.brand path { fill: #ccd0dc; }
.brand .outline { fill: none; stroke: #ccd0dc; stroke-width: 3; stroke-linecap: round; }
.brand .stem { stroke: #ccd0dc; stroke-width: 2; }
.brandtext { display: flex; flex-direction: column; }
.brandtext strong { font: 700 26px/30px "Liberation Sans", "Noto Sans CJK SC", sans-serif; }
.brandtext span { font: 12px/14px "DejaVu Sans", sans-serif; }
</style>
